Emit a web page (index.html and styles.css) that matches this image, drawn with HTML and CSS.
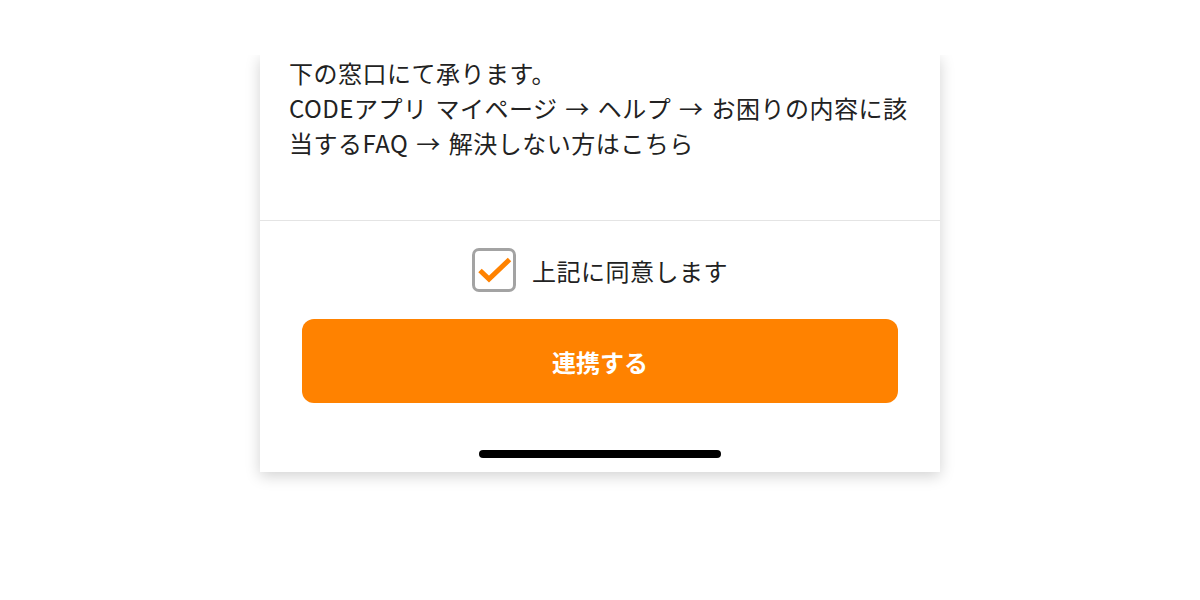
FILE: index.html
```html
<!DOCTYPE html>
<html lang="ja">
<head>
<meta charset="utf-8">
<title>連携</title>
<link rel="stylesheet" href="styles.css">
</head>
<body>
<div class="clip">
  <div class="card">
    <div class="notice">
      <p class="line">下の窓口にて承ります。</p>
      <p class="line">CODEアプリ マイページ → ヘルプ → お困りの内容に該</p>
      <p class="line">当するFAQ → 解決しない方はこちら</p>
    </div>
    <label class="agree">
      <span class="checkbox">
        <svg class="check" width="44" height="44" viewBox="0 0 44 44" aria-hidden="true">
          <path d="M8 22.5 L17 31 L37.5 11.5" fill="none" stroke="#ff8200" stroke-width="5" stroke-linejoin="miter"/>
        </svg>
      </span>
      <span class="agree-text">上記に同意します</span>
    </label>
    <button class="link-btn" type="button">連携する</button>
    <div class="home-bar-wrap"><span class="home-bar"></span></div>
  </div>
</div>
</body>
</html>
```

FILE: styles.css
```css
* { box-sizing: border-box; }

html, body {
  margin: 0;
  padding: 0;
  background: #ffffff;
}

body {
  font-family: "Noto Sans CJK JP", "Noto Sans", sans-serif;
  color: #222222;
}

.clip {
  width: 740px;
  margin: 55px auto 0;
  padding: 0 30px 40px;
  overflow: hidden;
}

.card {
  width: 680px;
  background: #ffffff;
  box-shadow: 0 4px 14px rgba(0, 0, 0, 0.18);
  display: flex;
  flex-direction: column;
}

.notice {
  padding: 0 29px 60px;
  border-bottom: 1px solid #e4e4e4;
}

.line {
  margin: 0;
  font-size: 24px;
  line-height: 35px;
  letter-spacing: 0.5px;
  word-spacing: 2px;
  white-space: nowrap;
  color: #222222;
}

.agree {
  display: flex;
  align-items: center;
  justify-content: center;
  gap: 16px;
  padding-top: 27px;
  height: 71px;
}

.checkbox {
  position: relative;
  width: 44px;
  height: 44px;
  border: 3px solid #a3a3a3;
  border-radius: 7px;
  background: #ffffff;
  flex: none;
}

.check {
  position: absolute;
  left: -3px;
  top: -3px;
}

.agree-text {
  font-size: 24px;
  line-height: 35px;
  letter-spacing: 0.5px;
  color: #222222;
}

.link-btn {
  margin: 27px 42px 0;
  height: 84px;
  border: none;
  border-radius: 12px;
  background: #ff8200;
  color: #ffffff;
  font-family: "Noto Sans CJK JP", "Noto Sans", sans-serif;
  font-size: 24px;
  font-weight: 700;
  padding: 0;
}

.home-bar-wrap {
  display: flex;
  justify-content: center;
  padding: 47px 0 14px;
}

.home-bar {
  display: block;
  width: 242px;
  height: 8px;
  border-radius: 4px;
  background: #000000;
}
```
